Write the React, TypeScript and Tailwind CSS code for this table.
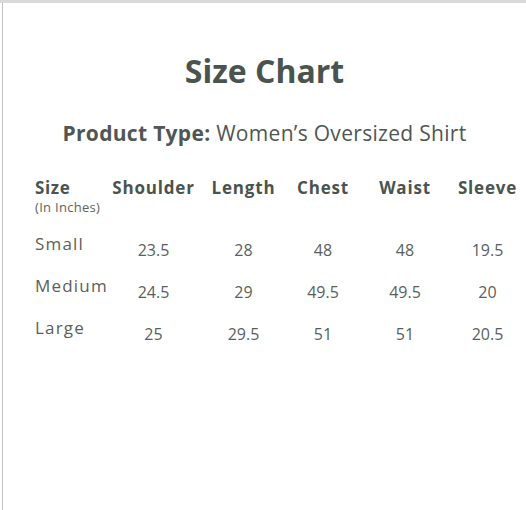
const COLS = ["Shoulder", "Length", "Chest", "Waist", "Sleeve"];

const ROWS = [
  { size: "Small", values: ["23.5", "28", "48", "48", "19.5"] },
  { size: "Medium", values: ["24.5", "29", "49.5", "49.5", "20"] },
  { size: "Large", values: ["25", "29.5", "51", "51", "20.5"] },
];

const GRID = "grid grid-cols-[75px_87px_93px_66px_98px_67px]";

export default function App() {
  return (
    <div
      className="w-[526px] h-[510px] bg-white border-t-[3px] border-[#d9d9d9] pl-[2px]"
      style={{ fontFamily: '"Open Sans", "Liberation Sans", sans-serif' }}
    >
      <div className="h-full border-l border-[#c2c2c2]">
        <h1 className="pt-[48px] text-center text-[32px] leading-[40px] font-bold text-[#4a544f]">
          Size Chart
        </h1>

        <p className="mt-[28px] text-center text-[21px] leading-[28px] text-[#4f5653] tracking-[0.3px]">
          <span className="font-bold">Product Type:</span> Women’s Oversized Shirt
        </p>

        <div className="mt-[30px] pl-[32px]">
          <div className={`${GRID} text-[#4a544f]`}>
            <div>
              <div className="text-[17px] leading-[22px] font-bold tracking-[0.6px]">Size</div>
              <div className="mt-[1px] text-[13px] leading-[15px] text-[#5e6360] tracking-[0.3px]">
                (In Inches)
              </div>
            </div>
            {COLS.map((c) => (
              <div key={c} className="text-center text-[17px] leading-[22px] font-bold tracking-[0.8px]">
                {c}
              </div>
            ))}
          </div>

          <div className="mt-[18px] flex flex-col gap-[14px]">
            {ROWS.map((r) => (
              <div key={r.size} className={`${GRID} text-[#5a5f5c]`}>
                <div className="text-[17px] leading-[22px] tracking-[1.2px]">{r.size}</div>
                {r.values.map((v, i) => (
                  <div key={i} className="pt-[6px] text-center text-[16px] leading-[22px]">
                    {v}
                  </div>
                ))}
              </div>
            ))}
          </div>
        </div>
      </div>
    </div>
  );
}
